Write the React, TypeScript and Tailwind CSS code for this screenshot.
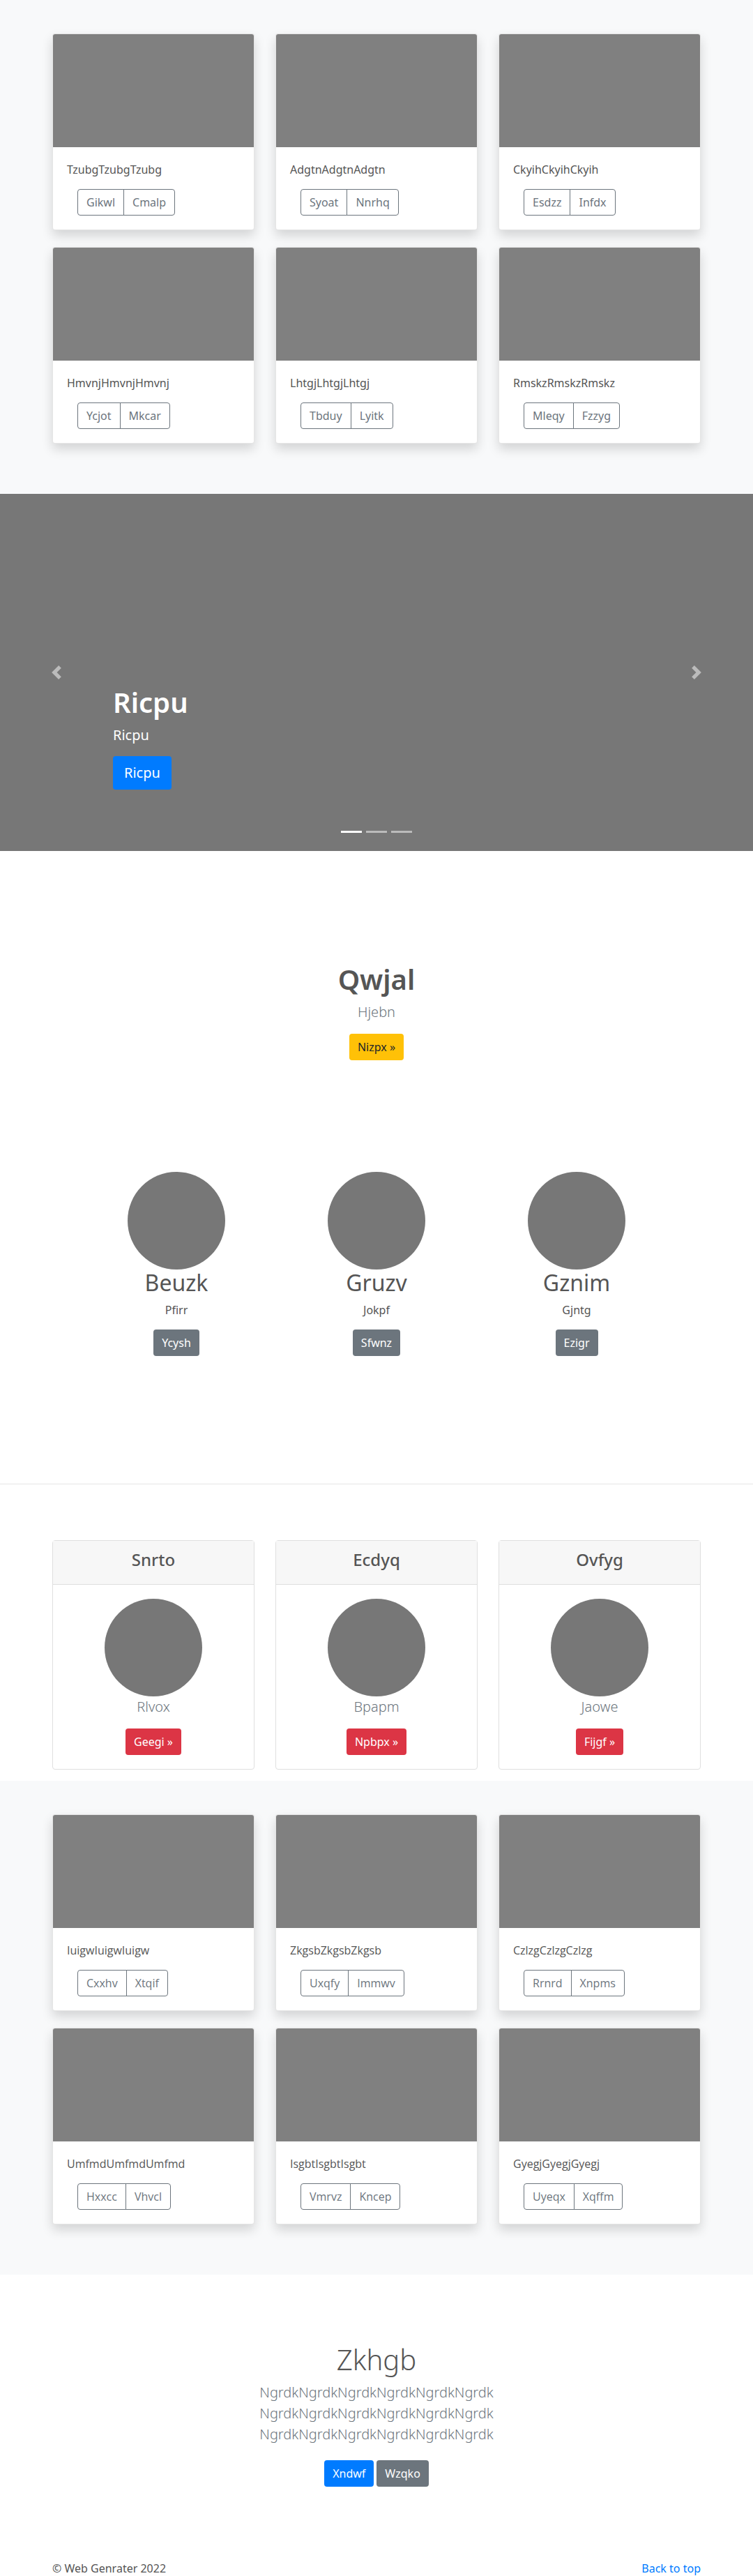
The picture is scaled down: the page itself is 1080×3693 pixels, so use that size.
const albumOne = [
    { text: "TzubgTzubgTzubg", btns: ["Gikwl", "Cmalp"] },
    { text: "AdgtnAdgtnAdgtn", btns: ["Syoat", "Nnrhq"] },
    { text: "CkyihCkyihCkyih", btns: ["Esdzz", "Infdx"] },
    { text: "HmvnjHmvnjHmvnj", btns: ["Ycjot", "Mkcar"] },
    { text: "LhtgjLhtgjLhtgj", btns: ["Tbduy", "Lyitk"] },
    { text: "RmskzRmskzRmskz", btns: ["Mleqy", "Fzzyg"] },
];

const albumTwo = [
    { text: "IuigwIuigwIuigw", btns: ["Cxxhv", "Xtqif"] },
    { text: "ZkgsbZkgsbZkgsb", btns: ["Uxqfy", "Immwv"] },
    { text: "CzlzgCzlzgCzlzg", btns: ["Rrnrd", "Xnpms"] },
    { text: "UmfmdUmfmdUmfmd", btns: ["Hxxcc", "Vhvcl"] },
    { text: "IsgbtIsgbtIsgbt", btns: ["Vmrvz", "Kncep"] },
    { text: "GyegjGyegjGyegj", btns: ["Uyeqx", "Xqffm"] },
];

const people = [
    { name: "Beuzk", sub: "Pfirr", btn: "Ycysh" },
    { name: "Gruzv", sub: "Jokpf", btn: "Sfwnz" },
    { name: "Gznim", sub: "Gjntg", btn: "Ezigr" },
];

const plans = [
    { title: "Snrto", sub: "Rlvox", btn: "Geegi »" },
    { title: "Ecdyq", sub: "Bpapm", btn: "Npbpx »" },
    { title: "Ovfyg", sub: "Jaowe", btn: "Fijgf »" },
];

type AlbumItem = { text: string; btns: string[] };

function AlbumCard({ item, alt }: { item: AlbumItem; alt?: boolean }) {
    return (
        <div className="bg-white border border-black/10 rounded shadow-[0_0.5rem_1rem_rgba(0,0,0,0.15)] overflow-hidden">
            <div className="h-[162px] bg-[#808080]" />
            <div className="p-5">
                <p className={`text-[16px] leading-6 text-[#555] mb-4 ${alt ? "font-['Open_Sans',sans-serif] text-[15px]" : ""}`}>
                    {item.text}
                </p>
                <div className="ml-[15px] inline-flex">
                    {item.btns.map((b, i) => (
                        <button
                            key={b}
                            className={`h-[38px] px-3 border border-[#6c757d] text-[#6c757d] text-[16px] ${
                                i === 0 ? "rounded-l" : "rounded-r -ml-px"
                            } ${alt ? "font-['Open_Sans',sans-serif] text-[15px]" : ""}`}
                        >
                            {b}
                        </button>
                    ))}
                </div>
            </div>
        </div>
    );
}

function Album({ items, alt }: { items: AlbumItem[]; alt?: boolean }) {
    return (
        <section className="bg-[#f8f9fa] pt-12 pb-6">
            <div className="w-[930px] mx-auto grid grid-cols-3 gap-x-[30px] gap-y-6 pb-12">
                {items.map((it) => (
                    <AlbumCard key={it.text} item={it} alt={alt} />
                ))}
            </div>
        </section>
    );
}

function Chevron({ dir }: { dir: "left" | "right" }) {
    return (
        <svg width="20" height="20" viewBox="0 0 8 8" className="fill-white/50">
            {dir === "left" ? (
                <path d="M5.25 0l-4 4 4 4 1.5-1.5L4.25 4l2.5-2.5L5.25 0z" />
            ) : (
                <path d="M2.75 0l-1.5 1.5L3.75 4l-2.5 2.5L2.75 8l4-4-4-4z" />
            )}
        </svg>
    );
}

function Carousel() {
    return (
        <section className="relative h-[512px] bg-[#777] flex flex-col justify-end px-[15%] pb-[88px] text-white">
            <div className="absolute left-0 top-0 bottom-0 w-[15%] flex items-center justify-center">
                <Chevron dir="left" />
            </div>
            <div className="absolute right-0 top-0 bottom-0 w-[15%] flex items-center justify-center">
                <Chevron dir="right" />
            </div>
            <h1 className="text-[40px] leading-[48px] font-semibold mb-2">Ricpu</h1>
            <p className="text-[20px] leading-[30px] mb-[15px]">Ricpu</p>
            <div>
                <button className="h-12 px-4 bg-[#007bff] rounded text-[20px]">Ricpu</button>
            </div>
            <div className="absolute left-0 right-0 bottom-[26px] flex justify-center gap-[6px]">
                <span className="w-[30px] h-[3px] bg-white" />
                <span className="w-[30px] h-[3px] bg-white/50" />
                <span className="w-[30px] h-[3px] bg-white/50" />
            </div>
        </section>
    );
}

export default function App() {
    return (
        <div className="font-['Segoe_UI','Noto_Sans',sans-serif] text-[#555] bg-white">
            <Album items={albumOne} />
            <Carousel />

            <section className="pt-[160px] flex flex-col items-center">
                <h2 className="text-[40px] leading-[48px] font-semibold mb-2">Qwjal</h2>
                <p className="text-[20px] leading-[30px] font-light text-[#6c757d] mb-4">Hjebn</p>
                <button className="h-[38px] px-3 rounded bg-[#ffc107] text-[#212529] text-[16px]">Nizpx »</button>
            </section>

            <section className="pt-[160px] pb-[183px]">
                <div className="w-[861px] mx-auto grid grid-cols-3">
                    {people.map((p) => (
                        <div key={p.name} className="flex flex-col items-center">
                            <div className="w-[140px] h-[140px] rounded-full bg-[#777]" />
                            <h2 className="text-[32px] leading-[38px] mb-2">{p.name}</h2>
                            <p className="text-[16px] leading-6 mb-4">{p.sub}</p>
                            <button className="h-[38px] px-3 rounded bg-[#6c757d] text-white text-[16px]">{p.btn}</button>
                        </div>
                    ))}
                </div>
            </section>

            <hr className="border-t border-[#e5e5e5]" />

            <section className="pt-[80px] pb-4">
                <div className="w-[930px] mx-auto grid grid-cols-3 gap-x-[30px]">
                    {plans.map((p) => (
                        <div key={p.title} className="border border-[#dfdfdf] rounded flex flex-col">
                            <div className="bg-[#f7f7f7] border-b border-[#dfdfdf] pt-3 pb-[13px] flex justify-center">
                                <h4 className="text-[24px] leading-[29px] font-medium mb-2">{p.title}</h4>
                            </div>
                            <div className="p-5 flex flex-col items-center">
                                <div className="w-[140px] h-[140px] rounded-full bg-[#777]" />
                                <p className="text-[20px] leading-[30px] font-light text-[#6c757d] mb-4">{p.sub}</p>
                                <button className="h-[38px] px-3 rounded bg-[#dc3545] text-white text-[16px]">{p.btn}</button>
                            </div>
                        </div>
                    ))}
                </div>
            </section>

            <Album items={albumTwo} alt />

            <section className="pt-[98px] pb-[57px] flex flex-col items-center">
                <h1 className="text-[40px] leading-[48px] font-light mb-2">Zkhgb</h1>
                <div className="text-[20px] leading-[30px] font-light text-[#6c757d] text-center">
                    <p>NgrdkNgrdkNgrdkNgrdkNgrdkNgrdk</p>
                    <p>NgrdkNgrdkNgrdkNgrdkNgrdkNgrdk</p>
                    <p>NgrdkNgrdkNgrdkNgrdkNgrdkNgrdk</p>
                </div>
                <div className="mt-[22px] flex gap-1">
                    <button className="h-[38px] px-3 rounded bg-[#007bff] text-white text-[16px]">Xndwf</button>
                    <button className="h-[38px] px-3 rounded bg-[#6c757d] text-white text-[16px]">Wzqko</button>
                </div>
            </section>

            <footer className="pt-12">
                <div className="w-[930px] mx-auto flex justify-between text-[16px] leading-6">
                    <p>© Web Genrater 2022</p>
                    <a href="#" className="text-[#007bff]">Back to top</a>
                </div>
            </footer>
        </div>
    );
}
